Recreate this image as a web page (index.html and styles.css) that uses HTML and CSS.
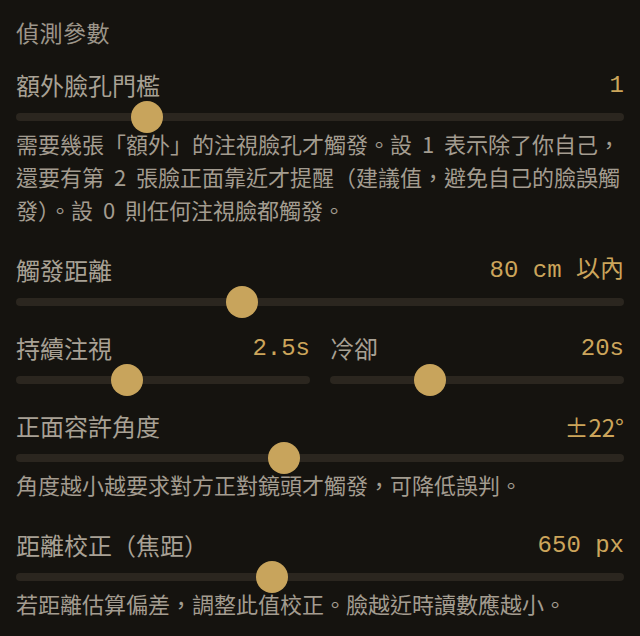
FILE: index.html
```html
<!DOCTYPE html>
<html lang="zh-Hant">
<head>
<meta charset="utf-8">
<title>偵測參數</title>
<link rel="stylesheet" href="styles.css">
</head>
<body>
<main class="panel">
  <h2 class="panel-title">偵測參數</h2>

  <section class="setting setting--desc">
    <div class="setting-head">
      <span class="setting-label">額外臉孔門檻</span>
      <span class="setting-value">1</span>
    </div>
    <input class="slider" type="range" min="0" max="5" step="1" value="1">
    <p class="setting-desc">需要幾張「額外」的注視臉孔才觸發。設 1 表示除了你自己，還要有第 2 張臉正面靠近才提醒（建議值，避免自己的臉誤觸發）。設 0 則任何注視臉都觸發。</p>
  </section>

  <section class="setting">
    <div class="setting-head">
      <span class="setting-label">觸發距離</span>
      <span class="setting-value">80 cm 以內</span>
    </div>
    <input class="slider" type="range" min="0" max="1000" step="1" value="365">
  </section>

  <div class="setting-pair">
    <section class="setting">
      <div class="setting-head">
        <span class="setting-label">持續注視</span>
        <span class="setting-value">2.5s</span>
      </div>
      <input class="slider" type="range" min="0.5" max="6" step="0.5" value="2.5">
    </section>
    <section class="setting">
      <div class="setting-head">
        <span class="setting-label">冷卻</span>
        <span class="setting-value">20s</span>
      </div>
      <input class="slider" type="range" min="0" max="1000" step="1" value="321">
    </section>
  </div>

  <section class="setting setting--desc">
    <div class="setting-head">
      <span class="setting-label">正面容許角度</span>
      <span class="setting-value setting-value--sans">±22°</span>
    </div>
    <input class="slider" type="range" min="0" max="1000" step="1" value="438">
    <p class="setting-desc">角度越小越要求對方正對鏡頭才觸發，可降低誤判。</p>
  </section>

  <section class="setting setting--desc">
    <div class="setting-head">
      <span class="setting-label">距離校正（焦距）</span>
      <span class="setting-value">650 px</span>
    </div>
    <input class="slider" type="range" min="400" max="1000" step="10" value="650">
    <p class="setting-desc">若距離估算偏差，調整此值校正。臉越近時讀數應越小。</p>
  </section>
</main>
</body>
</html>
```

FILE: styles.css
```css
html, body {
  margin: 0;
  padding: 0;
  background: #15130f;
}

body {
  font-family: "Noto Sans CJK JP", "Noto Sans CJK TC", sans-serif;
  color: #a8a195;
}

.panel {
  padding: 16px 16px 0;
  display: flex;
  flex-direction: column;
  gap: 22px;
}

.panel-title {
  margin: 0 0 1px;
  font-size: 23px;
  line-height: 32px;
  font-weight: 400;
  color: #9d968a;
  letter-spacing: 0.5px;
}

.setting {
  display: flex;
  flex-direction: column;
  min-width: 0;
}

.setting-pair {
  display: grid;
  grid-template-columns: 1fr 1fr;
  gap: 20px;
}

.setting-head {
  display: flex;
  justify-content: space-between;
  align-items: center;
  height: 30px;
}

.setting-label {
  font-size: 24px;
  line-height: 30px;
  color: #a8a195;
  transform: translateY(-1px);
}

.setting-value {
  font-family: "Liberation Mono", "Noto Sans CJK JP", monospace;
  font-size: 24px;
  line-height: 30px;
  color: #cca55b;
}

.setting-value--sans {
  font-family: "Noto Sans CJK JP", sans-serif;
}

.setting-desc {
  margin: 0;
  padding-bottom: 8px;
  font-size: 22px;
  line-height: 33px;
  word-spacing: 5px;
  color: #a39c90;
}

.slider {
  -webkit-appearance: none;
  appearance: none;
  display: block;
  width: 100%;
  height: 20px;
  margin: 6px 0 0;
  padding: 0;
  background: transparent;
}

.slider::-webkit-slider-runnable-track {
  height: 8px;
  border-radius: 4px;
  background: #2b261f;
}

.slider::-webkit-slider-thumb {
  -webkit-appearance: none;
  width: 32px;
  height: 32px;
  margin-top: -12px;
  border: none;
  border-radius: 50%;
  background: #c8a45c;
}

.slider::-moz-range-track {
  height: 8px;
  border-radius: 4px;
  background: #2b261f;
}

.slider::-moz-range-thumb {
  width: 32px;
  height: 32px;
  border: none;
  border-radius: 50%;
  background: #c8a45c;
}
```
